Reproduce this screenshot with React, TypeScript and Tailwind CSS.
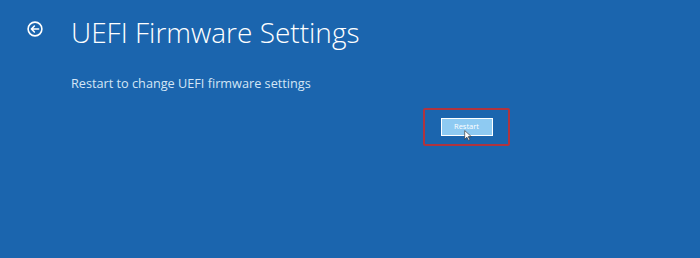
export default function App() {
  return (
    <div className="h-[258px] w-[700px] overflow-hidden bg-[#1b65ae] font-['Open_Sans',sans-serif]">
      {/* header */}
      <div className="flex items-start pl-[27px] pt-[14px]">
        <svg className="mt-[7px]" width="16" height="16" viewBox="0 0 16 16" fill="none" stroke="white" strokeWidth="1.6">
          <circle cx="8" cy="8" r="6.9" />
          <path d="M11.6 8H4.4M7.4 5 4.4 8l3 3" strokeLinecap="round" strokeLinejoin="round" />
        </svg>
        <h1 className="ml-[28px] text-[28px] font-light leading-[36px] text-white">UEFI Firmware Settings</h1>
      </div>

      <p className="ml-[71px] mt-[24px] text-[12.7px] leading-[18px] text-[#d3e5f6]">
        Restart to change UEFI firmware settings
      </p>

      <div className="ml-[423px] mt-[16px] flex h-[38px] w-[87px] items-center justify-center rounded-[2px] border-2 border-[#b0343f]">
        <div className="relative flex h-[18px] w-[52px] items-center justify-center border border-white bg-[#8ecaf2] text-[7.5px] leading-none text-white">
          Restart
          <svg className="absolute left-[22px] top-[11px]" width="8" height="11" viewBox="0 0 7 10">
            <path d="M0.5 0.5v8l2-2 1.5 3 1.2-.6-1.5-2.9H6.5z" fill="white" stroke="#333" strokeWidth="0.6" />
          </svg>
        </div>
      </div>
    </div>
  );
}
